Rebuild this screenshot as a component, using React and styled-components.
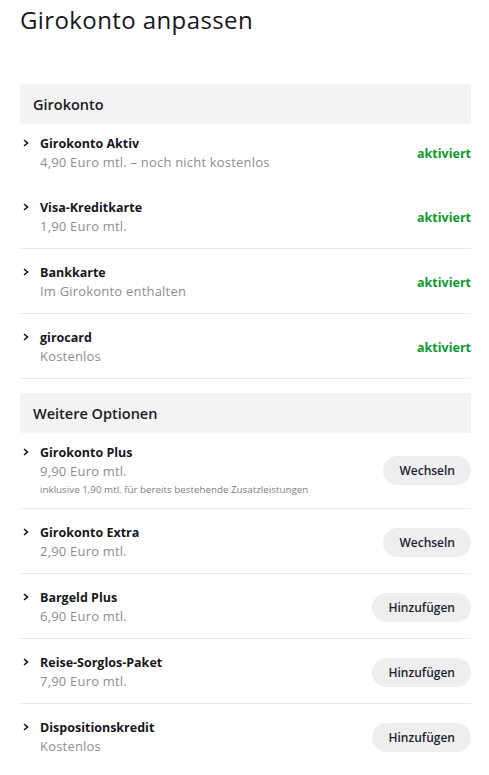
import React from 'react';
import styled, { createGlobalStyle } from 'styled-components';

const GlobalStyle = createGlobalStyle`
  body {
    margin: 0;
    background: #ffffff;
    font-family: 'Open Sans', 'Lato', sans-serif;
    color: #1b1b1f;
  }
`;

const Page = styled.div`
  padding: 5px 18px 0 20px;
`;

const Heading = styled.h1`
  margin: 0 0 49px;
  font-size: 24px;
  font-weight: 400;
  line-height: 30px;
  letter-spacing: 0.4px;
  color: #16171c;
`;

const Section = styled.section`
  margin-bottom: 14px;
`;

const SectionHead = styled.div`
  background: #f3f3f3;
  height: 40px;
  display: flex;
  align-items: center;
  padding-left: 13px;
  font-size: 14.5px;
  font-weight: 600;
  color: #1b1b1f;
`;

const Row = styled.div`
  display: flex;
  align-items: center;
  padding: ${p => (p.first ? '11px' : '15px')} 0 12px;
  border-top: ${p => (p.first || p.second ? 'none' : '1px solid #ebebeb')};
  border-bottom: ${p => (p.last ? '1px solid #ebebeb' : 'none')};
`;

const Chevron = styled.span`
  box-sizing: border-box;
  width: 20px;
  align-self: flex-start;
  display: flex;
  padding-left: 3px;
  padding-top: 4px;
`;

const Info = styled.div`
  flex: 1;
  display: flex;
  flex-direction: column;
`;

const Title = styled.div`
  font-size: 12.5px;
  font-weight: 700;
  line-height: 18px;
  color: #16171c;
`;

const Sub = styled.div`
  font-size: 13px;
  line-height: 19px;
  letter-spacing: 0.2px;
  color: #8e8e8e;
`;

const Note = styled.div`
  font-size: 9.8px;
  line-height: 12px;
  margin-top: 3px;
  color: #7d7d7d;
`;

const Status = styled.span`
  font-size: 12.5px;
  font-weight: 700;
  color: #0d9a2e;
`;

const Pill = styled.button`
  border: none;
  background: #eeeeee;
  border-radius: 15px;
  height: 29px;
  padding: 0 16px;
  font-family: inherit;
  font-size: 12px;
  font-weight: 600;
  color: #1a1f33;
  cursor: pointer;
`;

const Arrow = () => (
  <svg width="6" height="8" viewBox="0 0 6 8">
    <path d="M1 1 L4.5 4 L1 7" fill="none" stroke="#111" strokeWidth="1.6" />
  </svg>
);

const konto = [
  { title: 'Girokonto Aktiv', sub: '4,90 Euro mtl. – noch nicht kostenlos' },
  { title: 'Visa-Kreditkarte', sub: '1,90 Euro mtl.' },
  { title: 'Bankkarte', sub: 'Im Girokonto enthalten' },
  { title: 'girocard', sub: 'Kostenlos' },
];

const optionen = [
  {
    title: 'Girokonto Plus',
    sub: '9,90 Euro mtl.',
    note: 'inklusive 1,90 mtl. für bereits bestehende Zusatzleistungen',
    action: 'Wechseln',
  },
  { title: 'Girokonto Extra', sub: '2,90 Euro mtl.', action: 'Wechseln' },
  { title: 'Bargeld Plus', sub: '6,90 Euro mtl.', action: 'Hinzufügen' },
  { title: 'Reise-Sorglos-Paket', sub: '7,90 Euro mtl.', action: 'Hinzufügen' },
  { title: 'Dispositionskredit', sub: 'Kostenlos', action: 'Hinzufügen' },
];

const Item = ({ item, index, total, right, lastBorder }) => (
  <Row first={index === 0} second={index === 1 && right === 'status'} last={lastBorder && index === total - 1}>
    <Chevron><Arrow /></Chevron>
    <Info>
      <Title>{item.title}</Title>
      <Sub>{item.sub}</Sub>
      {item.note && <Note>{item.note}</Note>}
    </Info>
    {right === 'status' ? <Status>aktiviert</Status> : <Pill>{item.action}</Pill>}
  </Row>
);

export default function App() {
  return (
    <>
      <GlobalStyle />
      <Page>
        <Heading>Girokonto anpassen</Heading>
        <Section>
          <SectionHead>Girokonto</SectionHead>
          {konto.map((item, i) => (
            <Item key={item.title} item={item} index={i} total={konto.length} right="status" lastBorder />
          ))}
        </Section>
        <Section>
          <SectionHead>Weitere Optionen</SectionHead>
          {optionen.map((item, i) => (
            <Item key={item.title} item={item} index={i} total={optionen.length} right="action" />
          ))}
        </Section>
      </Page>
    </>
  );
}
